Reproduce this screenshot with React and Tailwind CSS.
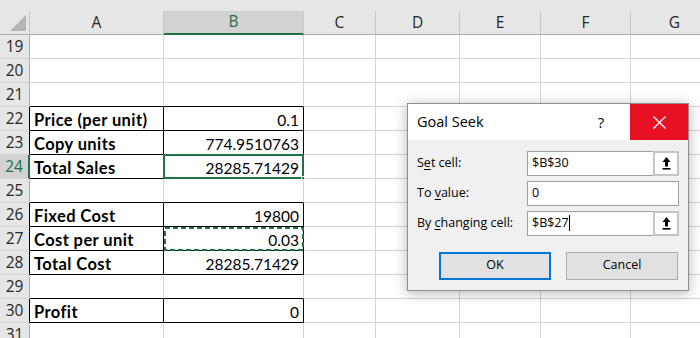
import React from 'react'

const cols = ['A', 'B', 'C', 'D', 'E', 'F', 'G']
const rows = [19, 20, 21, 22, 23, 24, 25, 26, 27, 28, 29, 30, 31]

const data = {
  22: ['Price (per unit)', '0.1'],
  23: ['Copy units', '774.9510763'],
  24: ['Total Sales', '28285.71429'],
  26: ['Fixed Cost', '19800'],
  27: ['Cost per unit', '0.03'],
  28: ['Total Cost', '28285.71429'],
  30: ['Profit', '0'],
}

const boxed = [22, 23, 24, 26, 27, 28, 30]
const isBoxed = (r, c) => boxed.includes(r) && (c === 0 || c === 1)

function ArrowIcon() {
  return (
    <svg width="9" height="13" viewBox="0 0 9 13">
      <path d="M4.5 0 L0.5 5 H3 V9.5 H6 V5 H8.5 Z" fill="#000" />
      <rect x="0.5" y="11" width="8" height="1.6" fill="#000" />
    </svg>
  )
}

function Cell({ r, c }) {
  const right = isBoxed(r, c) || isBoxed(r, c + 1) ? 'border-r-black' : 'border-r-[#d4d4d4]'
  const bottom = isBoxed(r, c) || isBoxed(r + 1, c) ? 'border-b-black' : 'border-b-[#d4d4d4]'
  const text = data[r] && c < 2 ? data[r][c] : ''

  return (
    <div className={`relative bg-white border-r border-b ${right} ${bottom} flex items-center pt-[2px] leading-[22px] text-black font-['Lato',sans-serif] ${c === 0 ? 'pl-[4px] font-bold text-[16.5px] tracking-[0.4px]' : 'justify-end pr-[4px] text-[15.5px]'}`}>
      {text}
      {r === 24 && c === 1 && (
        <>
          <div className="absolute -inset-px border-2 border-[#217346]" />
          <div className="absolute -right-[4px] -bottom-[4px] w-[6px] h-[6px] bg-[#217346] border border-white" />
        </>
      )}
      {r === 27 && c === 1 && (
        <svg className="absolute left-0 top-0" width="140" height="24" shapeRendering="crispEdges">
          <rect x="1" y="1" width="138" height="22" fill="none" stroke="#217346" strokeWidth="2" strokeDasharray="5 3" />
        </svg>
      )}
    </div>
  )
}

export default function App() {
  return (
    <div className="relative w-[700px] h-[338px] overflow-hidden bg-white">
      <div className="h-[11px] bg-[#e6e6e6]" />
      <div className="grid grid-cols-[30px_134px_140px_72px_84px_81px_90px_88px] auto-rows-[24px] font-['Open_Sans',sans-serif]">
        {/* corner */}
        <div className="bg-[#e6e6e6] border-r border-b border-r-[#c8c8c8] border-b-[#ababab] flex items-end justify-end pr-[3px] pb-[3px]">
          <svg width="16" height="16" viewBox="0 0 16 16">
            <path d="M16 0 V16 H0 Z" fill="#b4b4b4" />
          </svg>
        </div>
        {cols.map((col) => (
          <div
            key={col}
            className={`flex items-center justify-center text-[15.5px] border-r border-r-[#c8c8c8] ${
              col === 'B'
                ? 'bg-[#d2d2d2] text-[#217346] border-b-2 border-b-[#217346]'
                : 'bg-[#e6e6e6] text-[#262626] border-b border-b-[#ababab]'
            }`}
          >
            {col}
          </div>
        ))}

        {rows.map((r) => (
          <React.Fragment key={r}>
            <div
              className={`flex items-center justify-center text-[15.5px] border-b border-b-[#d4d4d4] ${
                r === 24
                  ? 'bg-[#d2d2d2] text-[#217346] border-r-2 border-r-[#217346]'
                  : isBoxed(r, 0)
                  ? 'bg-[#e6e6e6] text-[#262626] border-r border-r-black'
                  : 'bg-[#e6e6e6] text-[#262626] border-r border-r-[#ababab]'
              }`}
            >
              {r}
            </div>
            {cols.map((col, c) => (
              <Cell key={col} r={r} c={c} />
            ))}
          </React.Fragment>
        ))}
      </div>

      {/* Goal Seek dialog */}
      <div className="absolute left-[407px] top-[103px] w-[282px] h-[188px] flex flex-col bg-[#f0f0f0] border border-[#8e8e8e] shadow-[0_2px_12px_rgba(0,0,0,0.3)] font-['Open_Sans',sans-serif] text-black">
        <div className="h-[36px] shrink-0 flex items-center bg-white">
          <div className="flex-1 pl-[9px] text-[14.5px]">Goal Seek</div>
          <div className="w-[58px] text-center text-[15px]">?</div>
          <div className="w-[58px] h-full flex items-center justify-center bg-[#e81123]">
            <svg width="13" height="13" viewBox="0 0 13 13">
              <path d="M0.5 0.5 L12.5 12.5 M12.5 0.5 L0.5 12.5" stroke="#fff" strokeWidth="1.2" />
            </svg>
          </div>
        </div>

        <div className="flex flex-col gap-[5px] px-[9px] pt-[10.5px] text-[12.5px]">
          <div className="flex items-center">
            <div className="w-[110px]">
              S<span className="underline underline-offset-2">e</span>t cell:
            </div>
            <div className="w-[152px] h-[25px] flex items-center bg-white border border-[#a0a0a0]">
              <div className="flex-1 pl-[4px]">$B$30</div>
              <div className="w-[26px] h-[25px] -my-px -mr-px flex items-center justify-center bg-white border-2 border-[#c4c4c4]">
                <ArrowIcon />
              </div>
            </div>
          </div>
          <div className="flex items-center">
            <div className="w-[110px]">
              To <span className="underline underline-offset-2">v</span>alue:
            </div>
            <div className="w-[152px] h-[25px] flex items-center bg-white border border-[#a0a0a0]">
              <div className="flex-1 pl-[4px]">0</div>
            </div>
          </div>
          <div className="flex items-center">
            <div className="w-[110px]">
              By <span className="underline underline-offset-2">c</span>hanging cell:
            </div>
            <div className="w-[152px] h-[25px] flex items-center bg-white border border-[#a0a0a0]">
              <div className="flex-1 pl-[4px] flex items-center">
                $B$27<span className="inline-block w-px h-[16px] bg-black" />
              </div>
              <div className="w-[26px] h-[25px] -my-px -mr-px flex items-center justify-center bg-white border-2 border-[#c4c4c4]">
                <ArrowIcon />
              </div>
            </div>
          </div>

          <div className="flex justify-end gap-[15px] mt-[11px] pr-px">
            <div className="w-[112px] h-[28px] flex items-center justify-center bg-[#e1e1e1] border-2 border-[#0078d7]">OK</div>
            <div className="w-[112px] h-[28px] flex items-center justify-center bg-[#e1e1e1] border border-[#adadad]">Cancel</div>
          </div>
        </div>
      </div>
    </div>
  )
}
